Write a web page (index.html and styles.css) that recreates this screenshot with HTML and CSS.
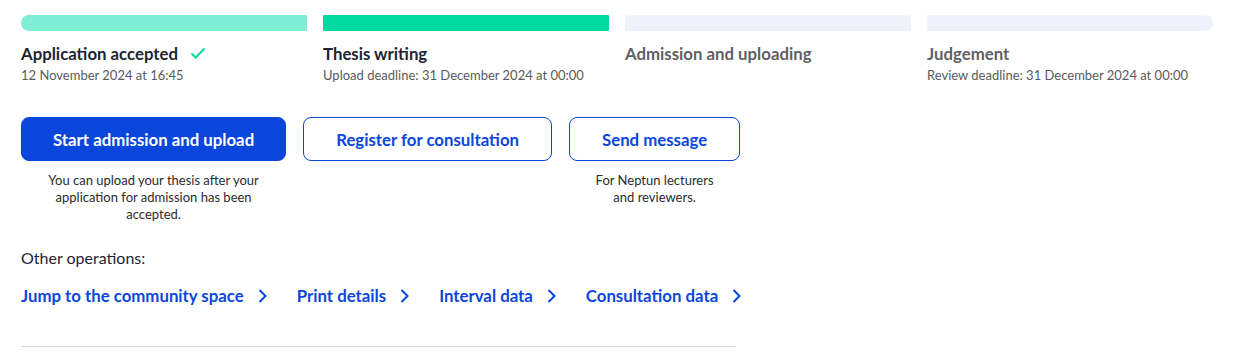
FILE: index.html
```html
<!DOCTYPE html>
<html lang="en">
  <head>
    <meta charset="utf-8">
    <title>Thesis</title>
    <link rel="stylesheet" href="styles.css">
  </head>
  <body>
    <div class="c_steps">
      <div class="step step_done">
        <div class="step_bar"></div>
        <div class="step_title">Application accepted
          <svg class="step_check" width="16" height="12" viewBox="0 0 16 12"><path d="M1.5 6.5l4 4 9-9" fill="none" stroke="#00d9a0" stroke-width="2"/></svg>
        </div>
        <div class="step_sub">12 November 2024 at 16:45</div>
      </div>
      <div class="step step_active">
        <div class="step_bar"></div>
        <div class="step_title">Thesis writing</div>
        <div class="step_sub">Upload deadline: 31 December 2024 at 00:00</div>
      </div>
      <div class="step step_todo">
        <div class="step_bar"></div>
        <div class="step_title">Admission and uploading</div>
      </div>
      <div class="step step_todo">
        <div class="step_bar"></div>
        <div class="step_title">Judgement</div>
        <div class="step_sub">Review deadline: 31 December 2024 at 00:00</div>
      </div>
    </div>

    <div class="c_actions">
      <div class="action">
        <button class="btn btn_primary">Start admission and upload</button>
        <div class="action_note">You can upload your thesis after your application for admission has been accepted.</div>
      </div>
      <div class="action">
        <button class="btn">Register for consultation</button>
      </div>
      <div class="action">
        <button class="btn">Send message</button>
        <div class="action_note">For Neptun lecturers and reviewers.</div>
      </div>
    </div>

    <div class="other_label">Other operations:</div>
    <div class="c_links">
      <a class="link" href="#">Jump to the community space <svg width="9" height="14" viewBox="0 0 9 14"><path d="M1.5 1l6 6-6 6" fill="none" stroke="currentColor" stroke-width="2"/></svg></a>
      <a class="link" href="#">Print details <svg width="9" height="14" viewBox="0 0 9 14"><path d="M1.5 1l6 6-6 6" fill="none" stroke="currentColor" stroke-width="2"/></svg></a>
      <a class="link" href="#">Interval data <svg width="9" height="14" viewBox="0 0 9 14"><path d="M1.5 1l6 6-6 6" fill="none" stroke="currentColor" stroke-width="2"/></svg></a>
      <a class="link" href="#">Consultation data <svg width="9" height="14" viewBox="0 0 9 14"><path d="M1.5 1l6 6-6 6" fill="none" stroke="currentColor" stroke-width="2"/></svg></a>
    </div>
    <hr class="divider">
  </body>
</html>
```

FILE: styles.css
```css
* {
  margin: 0;
  padding: 0;
  box-sizing: border-box;
  font-family: Lato, "Open Sans", sans-serif;
}
body {background-color: #fff; color: #1d2433; padding: 15px 22px 0 21px;}

.c_steps {display: grid; grid-template-columns: repeat(4, 1fr); gap: 16px;}
.step_bar {height: 16px; border-radius: 1px; background-color: #f0f1fa;}
.step:first-child .step_bar {border-radius: 8px 1px 1px 8px;}
.step:last-child .step_bar {border-radius: 1px 8px 8px 1px;}
.step_done .step_bar {background-color: #80eed4;}
.step_active .step_bar {background-color: #00d9a0;}
.step_title {display: flex; align-items: center; gap: 12px; margin-top: 13px; font-size: 16.8px; line-height: 20px; font-weight: 700; color: #1d2433;}
.step_todo .step_title {color: #5f5f66;}
.step_check {margin-top: -2px;}
.step_sub {margin-top: 2px; font-size: 13px; line-height: 18px; color: #5a5a5a;}

.c_actions {display: flex; align-items: flex-start; gap: 17px; margin-top: 33px;}
.action {display: flex; flex-direction: column;}
.btn {height: 44px; padding: 0 32px; border: 1px solid #0b46dc; border-radius: 8px; background-color: #fff; color: #0b46dc; font-size: 16.8px; font-weight: 700; cursor: pointer;}
.btn_primary {padding: 0 31px; background-color: #0b46dc; color: #fff;}
.action_note {width: 0; min-width: 100%; margin-top: 11px; padding: 0 16px; font-size: 13px; line-height: 17px; text-align: center; color: #2b2b2b;}

.other_label {margin-top: 25px; font-size: 16px; line-height: 20px; color: #1d2433;}
.c_links {display: flex; gap: 30px; margin-top: 18px;}
.link {display: flex; align-items: center; gap: 14px; font-size: 16.8px; line-height: 20px; font-weight: 700; color: #0b46dc; text-decoration: none;}
.divider {width: 715px; margin-top: 40px; border: none; border-top: 1px solid #d4d4d4;}
```
